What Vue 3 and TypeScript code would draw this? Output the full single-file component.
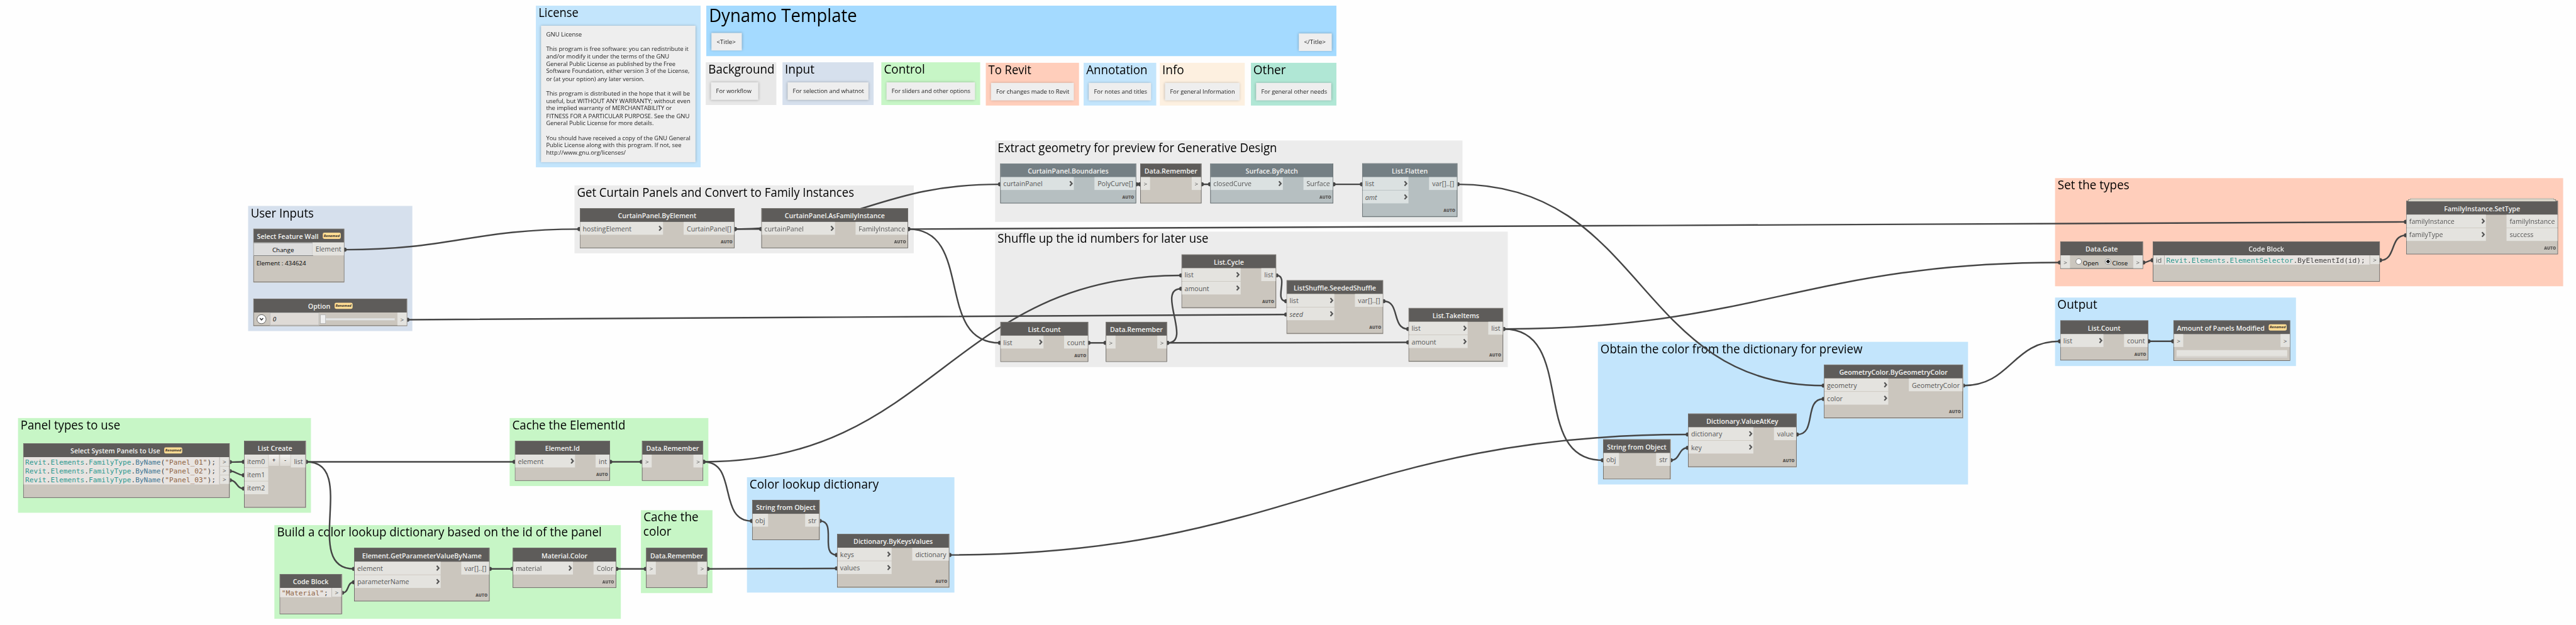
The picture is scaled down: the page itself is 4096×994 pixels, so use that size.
<script setup lang="ts">
import type { Directive } from 'vue'

interface TitleLine { text: string; w: number }
interface Group { x: number; y: number; r: number; b: number; tone: string; title: TitleLine[]; big?: boolean }
interface Note { x: number; y: number; w: number; h: number; lines: TitleLine[] }
interface Port { name: string; optional?: boolean }
type Kind = 'plain' | 'pass' | 'code' | 'create' | 'select' | 'slider' | 'gate' | 'watch'
interface Token { t: string; c: string }
interface GraphNode {
  id: string
  kind: Kind
  title: string
  x: number
  y: number
  r: number
  h: number
  ins?: Port[]
  outs?: Port[]
  inW?: number
  outW?: number
  auto?: boolean
  geo?: boolean
  renamed?: boolean
  stacked?: boolean
  code?: Token[][]
}

/* Squeezes a line of text horizontally to a given width. */
const vFit: Directive<HTMLElement, number> = {
  mounted(el, binding) {
    if (el.offsetWidth > 0) el.style.transform = `scaleX(${binding.value / el.offsetWidth})`
  },
}

const one = (text: string, w: number): TitleLine[] => [{ text, w }]

const groups: Group[] = [
  { x: 1041, y: 11, r: 1361, b: 325, tone: 'sky', title: one('License', 78) },
  { x: 1372, y: 11, r: 2596, b: 109, tone: 'azure', title: one('Dynamo Template', 288), big: true },
  { x: 1371, y: 121, r: 1508, b: 204, tone: 'smoke', title: one('Background', 128) },
  { x: 1520, y: 121, r: 1697, b: 204, tone: 'input', title: one('Input', 58) },
  { x: 1712, y: 121, r: 1904, b: 204, tone: 'green', title: one('Control', 80) },
  { x: 1915, y: 122, r: 2096, b: 205, tone: 'salmon', title: one('To Revit', 83) },
  { x: 2105, y: 122, r: 2246, b: 205, tone: 'sky', title: one('Annotation', 119) },
  { x: 2253, y: 122, r: 2418, b: 205, tone: 'cream', title: one('Info', 43) },
  { x: 2430, y: 122, r: 2596, b: 205, tone: 'mint', title: one('Other', 63) },
  { x: 482, y: 400, r: 801, b: 643, tone: 'input', title: one('User Inputs', 122) },
  { x: 1116, y: 360, r: 1775, b: 492, tone: 'gray', title: one('Get Curtain Panels and Convert to Family Instances', 538) },
  { x: 1933, y: 273, r: 2841, b: 431, tone: 'gray', title: one('Extract geometry for preview for Generative Design', 543) },
  { x: 1933, y: 450, r: 2929, b: 713, tone: 'gray', title: one('Shuffle up the id numbers for later use', 409) },
  { x: 3104, y: 664, r: 3823, b: 941, tone: 'sky', title: one('Obtain the color from the dictionary for preview', 509) },
  { x: 3992, y: 346, r: 4979, b: 556, tone: 'salmon', title: one('Set the types', 139) },
  { x: 3992, y: 578, r: 4460, b: 711, tone: 'sky', title: one('Output', 78) },
  { x: 35, y: 812, r: 604, b: 996, tone: 'green', title: one('Panel types to use', 194) },
  { x: 990, y: 812, r: 1376, b: 944, tone: 'green', title: one('Cache the ElementId', 220) },
  { x: 1245, y: 991, r: 1384, b: 1152, tone: 'green', title: [{ text: 'Cache the', w: 107 }, { text: 'color', w: 55 }] },
  { x: 533, y: 1020, r: 1206, b: 1202, tone: 'green', title: one('Build a color lookup dictionary based on the id of the panel', 631) },
  { x: 1451, y: 927, r: 1854, b: 1151, tone: 'sky', title: one('Color lookup dictionary', 251) },
]

const notes: Note[] = [
  {
    x: 1051, y: 50, w: 300, h: 265,
    lines: [
      { text: 'GNU License', w: 69 },
      { text: '', w: 0 },
      { text: 'This program is free software: you can redistribute it', w: 276 },
      { text: 'and/or modify it under the terms of the GNU', w: 239 },
      { text: 'General Public License as published by the Free', w: 251 },
      { text: 'Software Foundation, either version 3 of the License,', w: 278 },
      { text: 'or (at your option) any later version.', w: 191 },
      { text: '', w: 0 },
      { text: 'This program is distributed in the hope that it will be', w: 279 },
      { text: 'useful, but WITHOUT ANY WARRANTY; without even', w: 280 },
      { text: 'the implied warranty of MERCHANTABILITY or', w: 244 },
      { text: 'FITNESS FOR A PARTICULAR PURPOSE. See the GNU', w: 278 },
      { text: 'General Public License for more details.', w: 209 },
      { text: '', w: 0 },
      { text: 'You should have received a copy of the GNU General', w: 280 },
      { text: 'Public License along with this program. If not, see', w: 263 },
      { text: 'http://www.gnu.org/licenses/', w: 155 },
    ],
  },
  { x: 1382, y: 64, w: 59, h: 34, lines: one('<Title>', 37) },
  { x: 2523, y: 65, w: 64, h: 34, lines: one('</Title>', 42) },
  { x: 1381, y: 160, w: 92, h: 34, lines: one('For workflow', 69) },
  { x: 1530, y: 160, w: 157, h: 34, lines: one('For selection and whatnot', 138) },
  { x: 1722, y: 160, w: 172, h: 34, lines: one('For sliders and other options', 153) },
  { x: 1925, y: 161, w: 161, h: 34, lines: one('For changes made to Revit', 142) },
  { x: 2115, y: 161, w: 121, h: 34, lines: one('For notes and titles', 103) },
  { x: 2263, y: 161, w: 145, h: 34, lines: one('For general Information', 126) },
  { x: 2440, y: 161, w: 146, h: 34, lines: one('For general other needs', 128) },
]

const p = (...names: string[]): Port[] => names.map((name) => ({ name }))
const pass = (id: string, x: number, y: number, r: number): GraphNode => ({
  id, kind: 'pass', title: 'Data.Remember', x, y, r, h: 78, ins: p('>'), outs: p('>'), inW: 18, outW: 18,
})
const panelCode = (n: string): Token[] => [
  { t: 'Revit', c: 'ty' }, { t: '.', c: 'pn' }, { t: 'Elements', c: 'ty' }, { t: '.', c: 'pn' },
  { t: 'FamilyType', c: 'ty' }, { t: '.', c: 'pn' }, { t: 'ByName', c: 'fn' }, { t: '(', c: 'pn' },
  { t: `"${n}"`, c: 'st' }, { t: ');', c: 'pn' },
]

const nodes: GraphNode[] = [
  { id: 'wall', kind: 'select', title: 'Select Feature Wall', x: 492, y: 444, r: 669, h: 104, outs: p('Element'), outW: 61, renamed: true },
  { id: 'option', kind: 'slider', title: 'Option', x: 492, y: 580, r: 791, h: 53, outs: p('>'), outW: 18, renamed: true },
  { id: 'byElement', kind: 'plain', title: 'CurtainPanel.ByElement', x: 1126, y: 404, r: 1427, h: 78, ins: p('hostingElement'), outs: p('CurtainPanel[]'), inW: 161, outW: 98, auto: true },
  { id: 'asFamily', kind: 'plain', title: 'CurtainPanel.AsFamilyInstance', x: 1479, y: 404, r: 1764, h: 78, ins: p('curtainPanel'), outs: p('FamilyInstance'), inW: 142, outW: 101, auto: true },
  { id: 'boundaries', kind: 'plain', title: 'CurtainPanel.Boundaries', x: 1943, y: 317, r: 2207, h: 78, ins: p('curtainPanel'), outs: p('PolyCurve[]'), inW: 142, outW: 80, auto: true, geo: true },
  pass('rememberGeo', 2215, 317, 2334),
  { id: 'patch', kind: 'plain', title: 'Surface.ByPatch', x: 2351, y: 317, r: 2590, h: 78, ins: p('closedCurve'), outs: p('Surface'), inW: 140, outW: 57, auto: true, geo: true },
  { id: 'flatten', kind: 'plain', title: 'List.Flatten', x: 2646, y: 317, r: 2831, h: 104, ins: [{ name: 'list' }, { name: 'amt', optional: true }], outs: p('var[]..[]'), inW: 89, outW: 54, auto: true, geo: true },
  { id: 'count', kind: 'plain', title: 'List.Count', x: 1943, y: 625, r: 2114, h: 78, ins: p('list'), outs: p('count'), inW: 83, outW: 46, auto: true },
  pass('rememberCount', 2148, 625, 2267),
  { id: 'cycle', kind: 'plain', title: 'List.Cycle', x: 2295, y: 494, r: 2479, h: 104, ins: p('list', 'amount'), outs: p('list'), inW: 114, outW: 28, auto: true },
  { id: 'shuffle', kind: 'plain', title: 'ListShuffle.SeededShuffle', x: 2499, y: 544, r: 2687, h: 104, ins: [{ name: 'list' }, { name: 'seed', optional: true }], outs: p('var[]..[]'), inW: 92, outW: 54, auto: true },
  { id: 'take', kind: 'plain', title: 'List.TakeItems', x: 2736, y: 598, r: 2920, h: 104, ins: p('list', 'amount'), outs: p('list'), inW: 114, outW: 28, auto: true },
  { id: 'geoColor', kind: 'plain', title: 'GeometryColor.ByGeometryColor', x: 3543, y: 708, r: 3813, h: 104, ins: p('geometry', 'color'), outs: p('GeometryColor'), inW: 124, outW: 104, auto: true },
  { id: 'valueAtKey', kind: 'plain', title: 'Dictionary.ValueAtKey', x: 3279, y: 803, r: 3490, h: 104, ins: p('dictionary', 'key'), outs: p('value'), inW: 126, outW: 43, auto: true },
  { id: 'strKey', kind: 'pass', title: 'String from Object', x: 3114, y: 853, r: 3245, h: 78, ins: p('obj'), outs: p('str'), inW: 30, outW: 27 },
  { id: 'setType', kind: 'plain', title: 'FamilyInstance.SetType', x: 4674, y: 390, r: 4969, h: 104, ins: p('familyInstance', 'familyType'), outs: p('familyInstance', 'success'), inW: 154, outW: 99, auto: true, stacked: true },
  { id: 'gate', kind: 'gate', title: 'Data.Gate', x: 4002, y: 469, r: 4163, h: 53, ins: p('>'), outs: p('>'), inW: 18, outW: 18 },
  {
    id: 'selector', kind: 'code', title: 'Code Block', x: 4182, y: 469, r: 4623, h: 78, ins: p('id'),
    code: [[
      { t: 'Revit', c: 'ty' }, { t: '.', c: 'pn' }, { t: 'Elements', c: 'ty' }, { t: '.', c: 'pn' },
      { t: 'ElementSelector', c: 'ty' }, { t: '.ByElementId(id);', c: 'pn' },
    ]],
  },
  { id: 'countOut', kind: 'plain', title: 'List.Count', x: 4002, y: 622, r: 4173, h: 78, ins: p('list'), outs: p('count'), inW: 83, outW: 46, auto: true },
  { id: 'amount', kind: 'watch', title: 'Amount of Panels Modified', x: 4222, y: 622, r: 4449, h: 79, ins: p('>'), outs: p('>'), inW: 18, outW: 18, renamed: true },
  { id: 'panels', kind: 'code', title: 'Select System Panels to Use', x: 45, y: 861, r: 446, h: 106, renamed: true, code: [panelCode('Panel_01'), panelCode('Panel_02'), panelCode('Panel_03')] },
  { id: 'create', kind: 'create', title: 'List Create', x: 474, y: 856, r: 594, h: 130, ins: p('item0', 'item1', 'item2'), outs: p('list'), inW: 46, outW: 28 },
  { id: 'elementId', kind: 'plain', title: 'Element.Id', x: 1000, y: 856, r: 1185, h: 78, ins: p('element'), outs: p('int'), inW: 116, outW: 27, auto: true },
  pass('rememberId', 1247, 856, 1366),
  { id: 'param', kind: 'plain', title: 'Element.GetParameterValueByName', x: 688, y: 1064, r: 951, h: 104, ins: p('element', 'parameterName'), outs: p('var[]..[]'), inW: 167, outW: 54, auto: true },
  { id: 'material', kind: 'code', title: 'Code Block', x: 543, y: 1115, r: 664, h: 78, code: [[{ t: '"Material"', c: 'st' }, { t: ';', c: 'pn' }]] },
  { id: 'matColor', kind: 'plain', title: 'Material.Color', x: 996, y: 1064, r: 1197, h: 78, ins: p('material'), outs: p('Color'), inW: 116, outW: 43, auto: true },
  pass('rememberColor', 1255, 1064, 1374),
  { id: 'strLookup', kind: 'pass', title: 'String from Object', x: 1461, y: 971, r: 1592, h: 78, ins: p('obj'), outs: p('str'), inW: 30, outW: 27 },
  { id: 'byKeys', kind: 'plain', title: 'Dictionary.ByKeysValues', x: 1626, y: 1037, r: 1844, h: 104, ins: p('keys', 'values'), outs: p('dictionary'), inW: 105, outW: 71, auto: true },
]

const byId = new Map(nodes.map((n) => [n.id, n]))

/* Height of a port's centre on the canvas. */
function portY(n: GraphNode, index: number): number {
  return n.kind === 'code' ? n.y + 36.5 + index * 17.7 : n.y + 41 + index * 26
}

const links: [string, number, string, number][] = [
  ['wall', 0, 'byElement', 0], ['option', 0, 'shuffle', 1], ['byElement', 0, 'asFamily', 0],
  ['byElement', 0, 'boundaries', 0], ['asFamily', 0, 'setType', 0], ['asFamily', 0, 'count', 0],
  ['boundaries', 0, 'rememberGeo', 0], ['rememberGeo', 0, 'patch', 0], ['patch', 0, 'flatten', 0],
  ['flatten', 0, 'geoColor', 0], ['panels', 0, 'create', 0], ['panels', 1, 'create', 1],
  ['panels', 2, 'create', 2], ['create', 0, 'elementId', 0], ['create', 0, 'param', 0],
  ['material', 0, 'param', 1], ['param', 0, 'matColor', 0], ['matColor', 0, 'rememberColor', 0],
  ['rememberColor', 0, 'byKeys', 1], ['elementId', 0, 'rememberId', 0], ['rememberId', 0, 'cycle', 0],
  ['rememberId', 0, 'strLookup', 0], ['strLookup', 0, 'byKeys', 0], ['byKeys', 0, 'valueAtKey', 0],
  ['count', 0, 'rememberCount', 0], ['rememberCount', 0, 'cycle', 1], ['rememberCount', 0, 'take', 1],
  ['cycle', 0, 'shuffle', 0], ['shuffle', 0, 'take', 0], ['take', 0, 'gate', 0], ['take', 0, 'strKey', 0],
  ['strKey', 0, 'valueAtKey', 1], ['valueAtKey', 0, 'geoColor', 1], ['geoColor', 0, 'countOut', 0],
  ['countOut', 0, 'amount', 0], ['gate', 0, 'selector', 0], ['selector', 0, 'setType', 1],
]

const wires = links.map(([from, o, to, i]) => {
  const a = byId.get(from)!
  const b = byId.get(to)!
  const x0 = a.r + 1
  const y0 = portY(a, o)
  const x1 = b.x - 1
  const y1 = to === 'selector' ? b.y + 36.5 : portY(b, i)
  const off = 0.45 * Math.hypot(x1 - x0, y1 - y0)
  return { x0, y0, x1, y1, d: `M${x0} ${y0}C${x0 + off} ${y0} ${x1 - off} ${y1} ${x1} ${y1}` }
})

const px = (v: number): string => `${v}px`
</script>

<template>
  <main class="viewport">
    <div class="stage">
      <section
        v-for="(g, i) in groups" :key="'g' + i" class="group" :class="[g.tone, { big: g.big }]"
        :style="{ left: px(g.x), top: px(g.y), width: px(g.r - g.x), height: px(g.b - g.y) }"
      >
        <h2 v-for="t in g.title" :key="t.text"><span v-fit="t.w" class="fit">{{ t.text }}</span></h2>
      </section>

      <svg class="wires" width="5004" height="1214" viewBox="0 0 5004 1214">
        <g v-for="(w, i) in wires" :key="i">
          <path :d="w.d" />
          <circle :cx="w.x0 - 0.5" :cy="w.y0" r="4" />
          <circle :cx="w.x1 + 0.5" :cy="w.y1" r="4" />
        </g>
      </svg>

      <article
        v-for="(n, i) in notes" :key="'n' + i" class="note"
        :style="{ left: px(n.x), top: px(n.y), width: px(n.w), height: px(n.h) }"
      >
        <p v-for="(l, k) in n.lines" :key="k"><span v-if="l.text" v-fit="l.w" class="fit">{{ l.text }}</span></p>
      </article>

      <div
        v-for="n in nodes" :key="n.id" class="node" :class="{ geo: n.geo, stacked: n.stacked }"
        :style="{ left: px(n.x), top: px(n.y), width: px(n.r - n.x), height: px(n.h) }"
      >
        <header>
          <span>{{ n.title }}</span>
          <em v-if="n.renamed" class="badge">Renamed</em>
        </header>

        <div v-if="n.kind === 'code'" class="coderow">
          <div v-if="n.ins" class="idport">id</div>
          <div class="code">
            <div v-for="(line, k) in n.code" :key="k" class="line"><span v-for="(tk, m) in line" :key="m" :class="tk.c">{{ tk.t }}</span></div>
          </div>
          <div class="codeports">
            <div v-for="(line, k) in n.code" :key="k" class="codeport">&gt;</div>
          </div>
        </div>

        <div v-else class="body">
          <div v-if="n.ins" class="ports" :style="{ width: px(n.inW ?? 0) }">
            <div v-for="q in n.ins" :key="q.name" class="port" :class="{ arrow: q.name === '>' }">
              <span :class="{ optional: q.optional }">{{ q.name }}</span>
              <svg v-if="n.kind === 'plain'" class="chev" width="8" height="11" viewBox="0 0 8 11"><path d="M1.4 1l4 4.5-4 4.5" /></svg>
            </div>
          </div>

          <div v-if="n.kind === 'create'" class="buttons"><button>+</button><button>-</button></div>
          <button v-if="n.kind === 'select'" class="change">Change</button>
          <div v-if="n.kind === 'slider'" class="sliderbox">
            <svg class="knob" width="20" height="20" viewBox="0 0 20 20"><circle cx="10" cy="10" r="8.8" /><path d="M6.8 8l3.2 3.4L13.2 8" /></svg>
            <div class="value">0</div>
            <div class="thumb"></div>
            <div class="track"></div>
          </div>
          <div v-if="n.kind === 'gate'" class="radios">
            <i class="radio"></i><span>Open</span><i class="radio on"></i><span>Close</span>
          </div>

          <div class="ports outs" :style="{ width: px(n.outW ?? 0) }">
            <div v-for="q in n.outs" :key="q.name" class="port" :class="{ arrow: q.name === '>' }"><span>{{ q.name }}</span></div>
          </div>
        </div>

        <div v-if="n.kind === 'select'" class="picked">Element : 434624</div>
        <div v-if="n.kind === 'watch'" class="watchbox"></div>
        <div v-if="n.auto" class="auto">AUTO</div>
      </div>
    </div>
  </main>
</template>

<style>
body { margin: 0; background: #fefefe; overflow: hidden; }
</style>

<style scoped>
.viewport { width: 4096px; height: 994px; overflow: hidden; background: #fefefe; }
.stage {
  position: relative; width: 5004px; height: 1214px;
  transform: scale(0.81855, 0.81878); transform-origin: 0 0;
  font-family: "Open Sans", "Noto Sans", sans-serif; color: #555;
}
.stage * { box-sizing: border-box; }
.fit { display: inline-block; white-space: nowrap; transform-origin: 0 50%; }

.group { position: absolute; padding-left: 4.5px; }
.group h2 { margin: 0; height: 28.4px; line-height: 28.4px; font-size: 23.3px; font-weight: 400; color: #000; position: relative; top: -1px; }
.group.big h2 { font-size: 35.5px; height: 43px; line-height: 43px; top: -3.5px; }
.sky { background: #c3e5fc; }
.azure { background: #a4daff; }
.smoke { background: #e8e8e8; }
.input { background: #d6e0ed; }
.green { background: #c7f6c6; }
.salmon { background: #ffcebb; }
.cream { background: #fdf0e0; }
.mint { background: #b0e7d5; }
.gray { background: #ececec; }

.wires { position: absolute; left: 0; top: 0; display: block; }
.wires path { fill: none; stroke: #454545; stroke-width: 3; }
.wires circle { fill: #454545; }

.note { position: absolute; padding: 9.5px 10px 0; background: #eeeeee; box-shadow: 0 0 5px rgba(0, 0, 0, .28); }
.note p { margin: 0; height: 14.39px; line-height: 14.39px; font-size: 11px; color: #222; }

.node { position: absolute; border: 1px solid #5e5c5a; background: #cbc6be; display: flex; flex-direction: column; }
.node header {
  height: 26px; flex: none; display: flex; align-items: center; justify-content: center; gap: 8px;
  background: #5e5c5a; color: #f4f4f2; font-size: 13px; font-weight: 600; line-height: 18px; white-space: nowrap; padding-top: 1px;
}
.badge {
  width: 35px; height: 12px; margin-top: -1px; border-radius: 3px; background: #ffdc94; color: #33302a;
  font-size: 7px; line-height: 12px; font-weight: 700; text-align: center;
}
.node.geo { background: #b6bfc1; border-color: #565d60; }
.geo header { background: #747f84; }
.node.geo .port { background: #dbe1e1; }

.stacked::before, .stacked::after { content: ""; position: absolute; border: 1px solid #7f8078; border-bottom: 0; background: #dcd8cc; }
.stacked::before { left: 3px; right: 3px; top: -4px; height: 3px; }
.stacked::after { left: 7px; right: 7px; top: -6px; height: 2px; border-color: #b5a79c; }

.body { display: flex; align-items: flex-start; position: relative; }
.ports { display: flex; flex-direction: column; gap: 1px; flex: none; }
.outs { margin-left: auto; }
.port {
  height: 25px; display: flex; align-items: center; padding: 0 5px; background: #e4e3df;
  font-size: 13px; line-height: 25px; color: #555; white-space: nowrap;
}
.outs .port { padding: 0 5px 0 6px; }
.port.arrow, .outs .port.arrow { padding: 0; justify-content: center; font-size: 12px; }
.port .optional { font-style: italic; }
.port span { position: relative; top: .5px; }
.chev { margin-left: auto; margin-right: -4px; flex: none; }
.chev path { fill: none; stroke: #555; stroke-width: 2.7; }

.auto { position: absolute; right: 3px; bottom: 5px; font-size: 8px; line-height: 12px; font-weight: 800; color: #565452; }

.coderow { display: flex; align-items: flex-start; }
.code { flex: 1; background: #e8e4e1; padding: 0 3px; font-family: "DejaVu Sans Mono", "Liberation Mono", monospace; font-size: 13.66px; }
.line { height: 17.6px; line-height: 18.5px; white-space: pre; }
.ty { color: #2e998f; }
.fn { color: #417693; }
.st { color: #8f6445; }
.pn { color: #444; }
.codeports { width: 19px; flex: none; display: flex; flex-direction: column; gap: 1px; }
.codeport { height: 16.7px; line-height: 17px; font-size: 12px; text-align: center; background: #e4e3df; border-left: 1px solid #b8b5b0; }
.idport { width: 22px; height: 17.6px; line-height: 18px; text-align: center; font-size: 13px; background: #e4e3df; border-right: 1px solid #aaa7a2; }

.buttons { display: flex; gap: 2px; margin-left: 1px; }
.buttons button {
  width: 20px; height: 22px; padding: 0 0 1px; border: 0; background: linear-gradient(#f3f2f0, #dcd8d2);
  font-family: inherit; font-size: 12px; line-height: 20px; color: #000;
}
.change {
  width: 115px; height: 26px; padding: 2px 0 0; border: 1px solid #707070; border-left: 0; background: #dddddd;
  font-family: inherit; font-size: 12px; color: #000; margin-right: -1px;
}
.picked { font-size: 12px; line-height: 16px; color: #000; padding: 6px 5px 0; }

.sliderbox { flex: 1; display: flex; align-items: center; height: 25px; }
.knob { margin-left: 5px; margin-right: 6px; flex: none; }
.knob circle { fill: #fff; stroke: #444; stroke-width: 1; }
.knob path { fill: none; stroke: #333; stroke-width: 1.9; }
.value {
  width: 96px; height: 25px; border: 1px solid #b3b3b3; background: #dedad6; padding-left: 5px;
  font-size: 12px; line-height: 24px; font-style: italic; color: #000;
}
.thumb { width: 11px; height: 18px; margin-left: 2px; background: #f0f0f0; border: 1px solid #acacac; }
.track { width: 134px; height: 4px; background: #e7eaea; border: 1px solid #d6d6d6; border-left: 0; }

.radios { display: flex; align-items: center; height: 26px; flex: 1; padding-left: 11px; font-size: 12px; color: #000; }
.radios span { margin: 2px 12px 0 2px; width: 31px; white-space: nowrap; }
.radio { flex: none; width: 12px; height: 12px; margin-top: -2px; border: 1px solid #707070; border-radius: 50%; background: #fff; }
.radio.on { background: radial-gradient(circle, #1c1c1c 0 3px, #fff 3.6px); }
.radios span:last-child { margin-right: 0; }

.watchbox { margin: 6px 5px 0; height: 15px; background: #e4e3df; border-bottom: 2px solid #d2d0cc; box-shadow: inset 0 -1px 0 #cbc6be; }
</style>
